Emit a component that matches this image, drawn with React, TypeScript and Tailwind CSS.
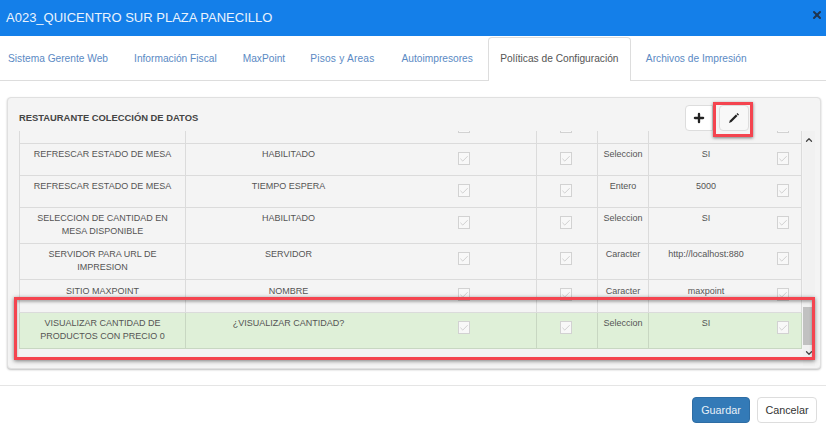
import { Check, ChevronDown, ChevronUp, Plus, X } from "lucide-react";

const tabs = [
  { label: "Sistema Gerente Web", className: "ml-2 mr-[26px]" },
  { label: "Información Fiscal", className: "mr-[26px]" },
  { label: "MaxPoint", className: "mr-[25px]" },
  { label: "Pisos y Areas", className: "mr-[27px] tracking-[0.2px]" },
  { label: "Autoimpresores", className: "mr-[15px]" },
];

const rows = [
  { h: "h-8", a: "", b: "", c: "", d: "" },
  { h: "h-8", a: "REFRESCAR ESTADO DE MESA", b: "HABILITADO", c: "Seleccion", d: "SI" },
  { h: "h-8", a: "REFRESCAR ESTADO DE MESA", b: "TIEMPO ESPERA", c: "Entero", d: "5000" },
  { h: "h-9", a: "SELECCION DE CANTIDAD EN MESA DISPONIBLE", b: "HABILITADO", c: "Seleccion", d: "SI" },
  { h: "h-9", a: "SERVIDOR PARA URL DE IMPRESION", b: "SERVIDOR", c: "Caracter", d: "http://localhost:880" },
  { h: "h-[33px]", a: "SITIO MAXPOINT", b: "NOMBRE", c: "Caracter", d: "maxpoint", pt: "pt-[5px]" },
  { h: "h-9", a: "VISUALIZAR CANTIDAD DE PRODUCTOS CON PRECIO 0", b: "¿VISUALIZAR CANTIDAD?", c: "Seleccion", d: "SI", green: true },
];

function Box() {
  return (
    <span className="flex h-[13px] w-3 items-center justify-center border border-[#d2d2d2] bg-[#f8f8f8]">
      <Check className="h-2.5 w-2.5 text-[#c8c8c8]" strokeWidth={2} />
    </span>
  );
}

function Row({ row }: { row: (typeof rows)[number] }) {
  const pt = row.pt ?? "pt-1";
  return (
    <div
      className={`grid shrink-0 grid-cols-[166px_206px_145px_61px_51px_115px_39px] border-b border-black/10 text-[9px] leading-[13px] ${row.h} ${
        row.green ? "bg-[#dff0d8]" : ""
      }`}
    >
      <div className={`border-l border-black/10 px-3 text-center ${pt}`}>{row.a}</div>
      <div className={`border-l border-black/10 text-center ${pt}`}>{row.b}</div>
      <div className="flex justify-center pt-2">
        <Box />
      </div>
      <div className="flex justify-center border-l border-black/10 pr-[2px] pt-2">
        <Box />
      </div>
      <div className={`border-l border-black/10 text-center ${pt}`}>{row.c}</div>
      <div className={`border-l border-black/10 text-center ${pt}`}>{row.d}</div>
      <div className="flex justify-center border-r border-black/10 pl-[1px] pt-2">
        <Box />
      </div>
    </div>
  );
}

export default function App() {
  return (
    <div className="relative flex h-[426px] w-[826px] flex-col overflow-hidden bg-white font-['Liberation_Sans',Arial,sans-serif] text-[#555]">
      {/* Header */}
      <div className="flex h-9 shrink-0 items-center justify-between bg-[#147fe9] pl-[6px] pr-[3px] text-[#eaf3fd]">
        <span className="text-[13px]">A023_QUICENTRO SUR PLAZA PANECILLO</span>
        <X className="mb-[6px] h-3 w-3 text-[#1f3550]" strokeWidth={4} />
      </div>

      {/* Tabs */}
      <div className="flex h-[45px] shrink-0 items-end border-b border-[#ddd] pt-[1px] text-[10.2px] text-[#5b8ac4]">
        {tabs.map((t) => (
          <span key={t.label} className={`pb-[14px] ${t.className}`}>
            {t.label}
          </span>
        ))}
        <span className="-mb-px flex h-[44px] w-[143px] items-center justify-center rounded-t border border-b-0 border-[#ddd] bg-white pb-[1px] text-[#555]">
          Políticas de Configuración
        </span>
        <span className="ml-[15px] pb-[14px]">Archivos de Impresión</span>
      </div>

      {/* Panel */}
      <div className="ml-[7px] mt-4 flex h-[272px] w-[814px] shrink-0 flex-col rounded border border-[#e0e0e0] bg-[#f4f4f4] pl-[11px] pr-[5px] shadow-[0_1px_2px_rgba(0,0,0,0.25)]">
        <div className="flex h-[33px] shrink-0 items-start justify-between">
          <span className="mt-[13px] text-[9.4px] font-bold leading-[13px] text-[#444]">RESTAURANTE COLECCIÓN DE DATOS</span>
          <div className="mr-[66px] mt-[7px] flex">
            <span className="flex h-[26px] w-7 items-center justify-center rounded-l border border-[#ddd] bg-white">
              <Plus className="h-[14px] w-[14px] text-[#222]" strokeWidth={4} />
            </span>
            <span className="ml-[6px] flex h-[26px] w-[30px] items-center justify-center rounded border border-[#ddd] bg-[#f8f8f8]">
              <svg width="12" height="12" viewBox="0 0 12 12">
                <path d="M9.4 1l1.6 1.6-.9.9-1.6-1.6z" fill="#222" />
                <path d="M7.9 2.5l1.6 1.6-6 6-2.5.9.9-2.5z" fill="#222" />
              </svg>
            </span>
          </div>
        </div>
        <div className="flex min-h-0 flex-1 pb-[19px]">
          <div className="flex w-[783px] shrink-0 flex-col justify-end overflow-hidden">
            {rows.map((row, i) => (
              <Row key={i} row={row} />
            ))}
          </div>
          <div className="-mb-[17px] ml-[1px] flex w-[12px] flex-col items-center justify-between bg-[#f1f1f1]">
            <ChevronUp className="mt-[4px] h-2.5 w-2.5 text-[#444]" strokeWidth={3} />
            <div className="mt-auto h-[38px] w-full bg-[#c1c1c1]" />
            <ChevronDown className="mb-[8px] mt-[3px] h-2.5 w-2.5 text-[#444]" strokeWidth={3} />
          </div>
        </div>
      </div>

      {/* Footer */}
      <div className="mt-4 flex flex-1 items-start justify-end gap-[7px] border-t border-[#e5e5e5] pr-[9px] pt-[11px] text-[10.8px]">
        <button className="h-[26px] w-[58px] rounded border border-[#2e6da4] bg-[#337ab7] text-[#e8f0f7]">Guardar</button>
        <button className="h-[26px] w-[60px] rounded border border-[#ddd] bg-white text-[#333]">Cancelar</button>
      </div>

      {/* Annotation boxes */}
      <div className="absolute left-[713px] top-[102px] h-[35px] w-[40px] border-[3px] border-[#f4444f] shadow-[0_1px_3px_rgba(0,0,0,0.5)]" />
      <div className="absolute left-[14px] top-[297px] h-[63px] w-[801px] border-[3px] border-[#f4444f] shadow-[0_1px_4px_rgba(0,0,0,0.5),inset_0_2px_3px_rgba(0,0,0,0.3)]" />
    </div>
  );
}
